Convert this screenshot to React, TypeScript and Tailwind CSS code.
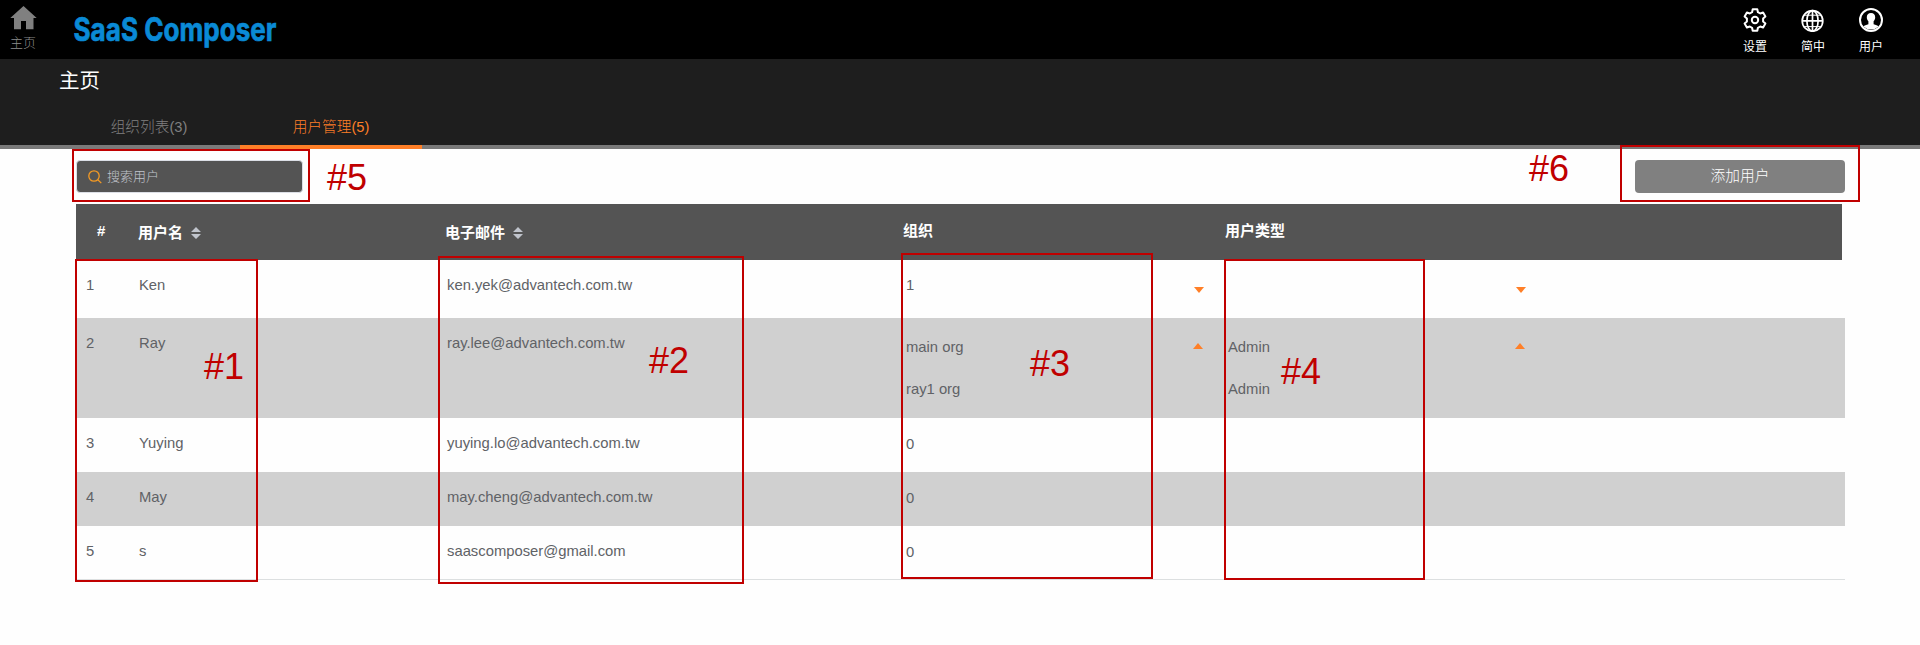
import React from "react";

type User = {
  id: number;
  name: string;
  email: string;
  orgs: string[];
  types: string[];
  toggle?: "down" | "up";
  height: string;
};

const users: User[] = [
  { id: 1, name: "Ken", email: "ken.yek@advantech.com.tw", orgs: ["1"], types: [], toggle: "down", height: "h-[58px]" },
  { id: 2, name: "Ray", email: "ray.lee@advantech.com.tw", orgs: ["main org", "ray1 org"], types: ["Admin", "Admin"], toggle: "up", height: "h-[100px]" },
  { id: 3, name: "Yuying", email: "yuying.lo@advantech.com.tw", orgs: ["0"], types: [], height: "h-[54px]" },
  { id: 4, name: "May", email: "may.cheng@advantech.com.tw", orgs: ["0"], types: [], height: "h-[54px]" },
  { id: 5, name: "s", email: "saascomposer@gmail.com", orgs: ["0"], types: [], height: "h-[54px]" },
];

const callouts = [
  { label: "#1", box: "left-[75px] top-[259px] h-[323px] w-[183px]", text: "left-[204px] top-[347px]" },
  { label: "#2", box: "left-[438px] top-[256px] h-[328px] w-[306px]", text: "left-[649px] top-[341px]" },
  { label: "#3", box: "left-[901px] top-[253px] h-[326px] w-[252px]", text: "left-[1030px] top-[344px]" },
  { label: "#4", box: "left-[1224px] top-[259px] h-[321px] w-[201px]", text: "left-[1281px] top-[352px]" },
  { label: "#5", box: "left-[72px] top-[149px] h-[53px] w-[238px]", text: "left-[327px] top-[158px]" },
  { label: "#6", box: "left-[1620px] top-[145px] h-[57px] w-[240px]", text: "left-[1529px] top-[149px]" },
];

const columns = "grid grid-cols-[62px_308px_459px_322px_1fr]";

function HomeIcon() {
  return (
    <svg className="block h-6 w-[27px]" viewBox="0 0 27 24" fill="#808080">
      <path d="M13.5 0 0.3 12H4v11.3h7v-8.2h5v8.200h7.500V12h3.200z" />
    </svg>
  );
}

function GearIcon() {
  return (
    <svg className="block size-6" viewBox="0 0 24 24" fill="none" stroke="#fff" strokeWidth="2" strokeLinejoin="round">
      <path d="M9.7 1.2h4.6l.6 3 2.3 1.3 2.9-1 2.3 3.9-2.3 2v3.2l2.3 2-2.3 3.9-2.9-1-2.3 1.3-.6 3H9.700l-.6-3-2.3-1.300-2.900 1-2.300-3.900 2.300-2v-3.200l-2.300-2 2.300-3.900 2.900 1 2.300-1.300z" />
      <circle cx="12" cy="12" r="3.2" />
    </svg>
  );
}

function GlobeIcon() {
  return (
    <svg className="block size-6" viewBox="0 0 24 24" fill="none" stroke="#fff" strokeWidth="1.7">
      <circle cx="11.500" cy="12.900" r="10.300" />
      <ellipse cx="11.500" cy="12.900" rx="5.600" ry="10.300" />
      <path d="M11.500 2.600v20.600M1.200 12.900h20.600" strokeWidth="1.700" />
      <path d="M3.200 7.200h16.600M3.200 18.600h16.600" strokeWidth="1" />
    </svg>
  );
}

function UserIcon() {
  return (
    <svg className="block size-6" viewBox="0 0 24 24">
      <circle cx="12" cy="12" r="11" fill="#000" stroke="#fff" strokeWidth="2" />
      <path d="M12 5c-2.800 0-4.200 1.800-4.200 4.300 0 1.700.7 3 1.600 4v2.900c-2.200.5-4 1.200-5 2.200a11 11 0 0 0 15.200 0c-1-1-2.800-1.700-5-2.200v-2.900c.9-1 1.600-2.300 1.600-4C16.200 6.800 14.800 5 12 5z" fill="#fff" />
    </svg>
  );
}

function SearchIcon() {
  return (
    <svg className="block size-[14px]" viewBox="0 0 14 14" fill="none" stroke="#f59a23" strokeWidth="1.300">
      <circle cx="6" cy="6" r="5.200" />
      <path d="m9.800 9.800 3.500 3.300" />
    </svg>
  );
}

function SortIcon() {
  return (
    <svg className="block h-3 w-[10px]" viewBox="0 0 10 12" fill="#c0c4cc">
      <path d="M5 0l5 5H0zM5 12l5-5H0z" />
    </svg>
  );
}

function Caret({ dir }: { dir: "down" | "up" }) {
  return (
    <svg className="block h-[6px] w-[10px]" viewBox="0 0 10 6" fill="#ff7f27">
      <path d={dir === "down" ? "M0 0h10L5 6z" : "M0 6h10L5 0z"} />
    </svg>
  );
}

function Cell({ lines, toggle }: { lines: string[]; toggle?: "down" | "up" }) {
  const multi = toggle === "up";
  return (
    <div className="flex items-start">
      <div className={`w-[287px] ${multi ? "pt-[18px]" : toggle ? "pt-[14px]" : "pt-[15px]"}`}>
        {lines.map((line, i) => (
          <div key={i} className={multi ? "h-[42px] leading-[22px]" : "leading-[22px]"}>
            {line}
          </div>
        ))}
      </div>
      {toggle && (
        <div className={toggle === "down" ? "ml-px pt-[27px]" : "pt-[25px]"}>
          <Caret dir={toggle} />
        </div>
      )}
    </div>
  );
}

function NavItem({ icon, label }: { icon: React.ReactNode; label: string }) {
  return (
    <div className="flex w-6 flex-col items-center text-white">
      {icon}
      <span className="mt-[6px] text-[12px] leading-[18px] whitespace-nowrap">{label}</span>
    </div>
  );
}

export default function App() {
  return (
    <div className="relative h-[645px] w-[1920px] overflow-hidden bg-[#fefefe] font-['Liberation_Sans','Noto_Sans_CJK_SC',sans-serif]">
      <header className="flex h-[59px] bg-black">
        <div className="flex w-[73px] flex-col pt-[6px] pl-[10px] text-[#8c8c8c]">
          <HomeIcon />
          <span className="mt-[4px] text-[13px] leading-[18px] font-light">主页</span>
        </div>
        <svg className="block h-[59px] w-[220px] overflow-visible font-['Inter','Liberation_Sans',sans-serif]" viewBox="0 0 220 59">
          <text x="0.500" y="41" fontSize="32.500" fontWeight="700" fill="#0a8ad6" stroke="#0a8ad6" strokeWidth="0.700" textLength="203" lengthAdjust="spacingAndGlyphs">
            SaaS Composer
          </text>
        </svg>
        <nav className="ml-auto flex gap-[34px] pt-2 pr-[37px]">
          <NavItem icon={<GearIcon />} label="设置" />
          <NavItem icon={<GlobeIcon />} label="简中" />
          <NavItem icon={<UserIcon />} label="用户" />
        </nav>
      </header>

      <section className="flex h-[90px] flex-col bg-[#1e1e1e]">
        <h1 className="h-[46px] pt-[8px] pl-[59px] text-[20.500px] leading-[28px] font-normal text-white">主页</h1>
        <div className="flex h-11 border-b-4 border-[#7a7a7a] pl-[58px] text-[14.700px] leading-[20px]">
          <div className="w-[182px] pt-[12px] text-center font-light text-[#808080]">组织列表(3)</div>
          <div className="h-11 w-[182px] border-b-4 border-[#ff7f27] pt-[12px] text-center font-light text-[#ff7f27]">用户管理(5)</div>
        </div>
      </section>

      <div className="flex h-[55px] items-start justify-between pt-[11px] pr-[75px] pl-[76px]">
        <div className="flex h-[33px] w-[227px] items-center gap-[5px] rounded-[4px] border border-[#dcdfe6] bg-[#545454] pl-[11px] text-[13px] font-light text-[#c0c4cc]">
          <SearchIcon />
          <span>搜索用户</span>
        </div>
        <button className="h-[33px] w-[210px] rounded-[4px] bg-[#808080] text-[14.700px] font-light text-white">添加用户</button>
      </div>

      <main className="w-[1845px] pl-[76px]">
        <div className={`${columns} h-14 w-[1766px] bg-[#545454] text-[15px] leading-[20px] font-bold text-white`}>
          <div className="pt-[17px] pl-[21px]">#</div>
          <div className="flex gap-2 pt-[19px]">
            用户名
            <span className="pt-1"><SortIcon /></span>
          </div>
          <div className="-ml-px flex gap-2 pt-[19px]">
            电子邮件
            <span className="pt-1"><SortIcon /></span>
          </div>
          <div className="-ml-[2px] pt-[17px]">组织</div>
          <div className="-ml-[2px] pt-[17px]">用户类型</div>
        </div>
        {users.map((u) => (
          <div
            key={u.id}
            className={`${columns} ${u.height} ${u.id % 2 === 0 ? "bg-[#d0d0d0]" : "bg-[#fefefe]"} ${u.id === 5 ? "border-b border-[#dcdfe0]" : ""} ml-px text-[14.800px] leading-[22px] text-[#606266]`}
          >
            <div className="pt-[14px] pl-[9px]">{u.id}</div>
            <div className="pt-[14px]">{u.name}</div>
            <div className="pt-[14px]">{u.email}</div>
            <Cell lines={u.orgs} toggle={u.toggle} />
            <Cell lines={u.types} toggle={u.toggle} />
          </div>
        ))}
      </main>

      {callouts.map((c) => (
        <React.Fragment key={c.label}>
          <div className={`absolute border-2 border-[#c00000] ${c.box}`} />
          <div className={`absolute text-[36px] leading-[40px] text-[#c00000] ${c.text}`}>{c.label}</div>
        </React.Fragment>
      ))}
    </div>
  );
}
